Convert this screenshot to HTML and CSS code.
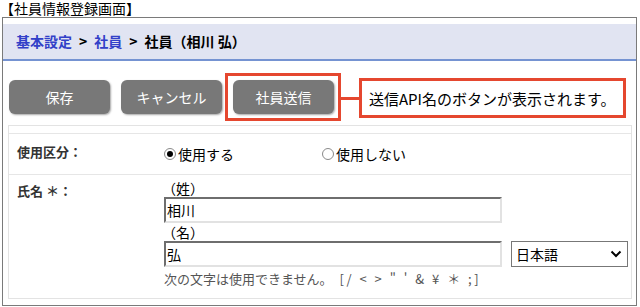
FILE: index.html
```html
<!DOCTYPE html>
<html lang="ja">
<head>
<meta charset="utf-8">
<link rel="stylesheet" href="styles.css">
</head>
<body>
<div class="title">【社員情報登録画面】</div>
<div class="frame">
  <div class="crumb">
    <a class="link">基本設定</a><span class="sep">&gt;</span><a class="link">社員</a><span class="sep">&gt;</span><span>社員（相川 弘）</span>
  </div>
  <div class="actions">
    <button class="btn">保存</button>
    <button class="btn">キャンセル</button>
    <button class="btn">社員送信</button>
    <div class="mark"></div>
    <div class="connector"></div>
    <div class="callout">送信API名のボタンが表示されます。</div>
  </div>
  <div class="form">
    <div class="spacer-row"></div>
    <div class="row row-use">
      <div class="label">使用区分：</div>
      <div class="value radios">
        <span class="radio"><span class="dot on"></span>使用する</span>
        <span class="radio"><span class="dot"></span>使用しない</span>
      </div>
    </div>
    <div class="row row-name">
      <div class="label">氏名 ＊：</div>
      <div class="value">
        <div class="sub">（姓）</div>
        <div class="field"><span class="input">相川</span></div>
        <div class="sub">（名）</div>
        <div class="field"><span class="input">弘</span><span class="select">日本語<svg width="12" height="8" viewBox="0 0 12 8"><path d="M1.5 1.5 L6 6 L10.5 1.5" fill="none" stroke="#000" stroke-width="2"/></svg></span></div>
        <div class="hint">次の文字は使用できません。 <span class="chars">[/ &lt; &gt; " ' &amp; ¥ ＊ ;]</span></div>
      </div>
    </div>
  </div>
</div>
</body>
</html>
```
FILE: styles.css
```css
* { box-sizing: border-box; }
body {
  margin: 0;
  font-family: "Noto Sans CJK JP", "Noto Sans", sans-serif;
  color: #000;
  background: #fff;
  width: 640px;
  height: 307px;
  overflow: hidden;
}
.title {
  font-size: 14px;
  line-height: 17px;
  height: 17px;
}
.frame {
  margin-left: 2px;
  width: 635px;
  height: 289px;
  border: 1px solid #7a7a7a;
  padding-top: 6px;
}
.crumb {
  height: 37px;
  background: #e1e4f2;
  border-bottom: 2px solid #7593d2;
  padding-left: 13px;
  display: flex;
  align-items: center;
  font-size: 14px;
  font-weight: bold;
  padding-bottom: 1px;
}
.link { color: #3240c8; }
.sep { margin: 0 7px; color: #000; }
.actions {
  position: relative;
  display: flex;
  gap: 11px;
  padding-left: 6px;
  margin-top: 19px;
  height: 34px;
}
.btn {
  width: 101px;
  height: 34px;
  border: none;
  border-radius: 6px;
  background: #787878;
  color: #fff;
  font-family: inherit;
  font-size: 14px;
  box-shadow: 1px 1px 2px rgba(0,0,0,0.35);
  padding: 0;
}
.mark {
  position: absolute;
  left: 222px;
  top: -7px;
  width: 116px;
  height: 48px;
  border: 3px solid #e5472f;
}
.connector {
  position: absolute;
  left: 337px;
  top: 17px;
  width: 20px;
  height: 3px;
  background: #e5472f;
}
.callout {
  position: absolute;
  left: 356px;
  top: -2px;
  width: 267px;
  height: 40px;
  border: 3px solid #e5472f;
  font-size: 15px;
  display: flex;
  align-items: center;
  padding-left: 7px;
  background: #fff;
}
.form {
  margin: 11px 0 0 5px;
  width: 624px;
  border: 1px solid #e3e3e3;
}
.spacer-row {
  height: 8px;
  border-bottom: 1px solid #e6e6e6;
}
.row {
  display: flex;
}
.row-use {
  height: 41px;
  border-bottom: 1px solid #e6e6e6;
  align-items: center;
}
.label {
  width: 155px;
  padding-left: 8px;
  font-size: 13px;
  font-weight: bold;
  color: #333;
  flex-shrink: 0;
}
.row-use .label { margin-top: -5px; }
.radios {
  display: flex;
  font-size: 14px;
}
.radio {
  display: flex;
  align-items: center;
  width: 158px;
}
.dot {
  width: 12px;
  height: 12px;
  border: 1px solid #8a8a8a;
  border-radius: 50%;
  margin-right: 2px;
  display: flex;
  align-items: center;
  justify-content: center;
}
.dot.on::after {
  content: "";
  width: 6px;
  height: 6px;
  border-radius: 50%;
  background: #000;
}
.row-name {
  padding-top: 4px;
  height: 123px;
}
.row-name .label { padding-top: 2px; }
.sub {
  font-size: 14px;
  line-height: 18px;
  height: 18px;
  margin-left: -2px;
}
.field {
  display: flex;
  gap: 9px;
}
.input {
  width: 338px;
  height: 26px;
  border-style: solid;
  border-width: 2px;
  border-color: #6e6e6e #e2e2e2 #e2e2e2 #6e6e6e;
  font-size: 14px;
  line-height: 22px;
  padding-left: 1px;
}
.select {
  width: 117px;
  height: 26px;
  border: 1px solid #777;
  font-size: 14px;
  display: flex;
  align-items: center;
  justify-content: space-between;
  padding: 0 5px 0 4px;
}
.hint {
  font-size: 13px;
  color: #555;
  margin-top: 3px;
  line-height: 17px;
}
.chars {
  margin-left: 4px;
  letter-spacing: 2.5px;
}
```
